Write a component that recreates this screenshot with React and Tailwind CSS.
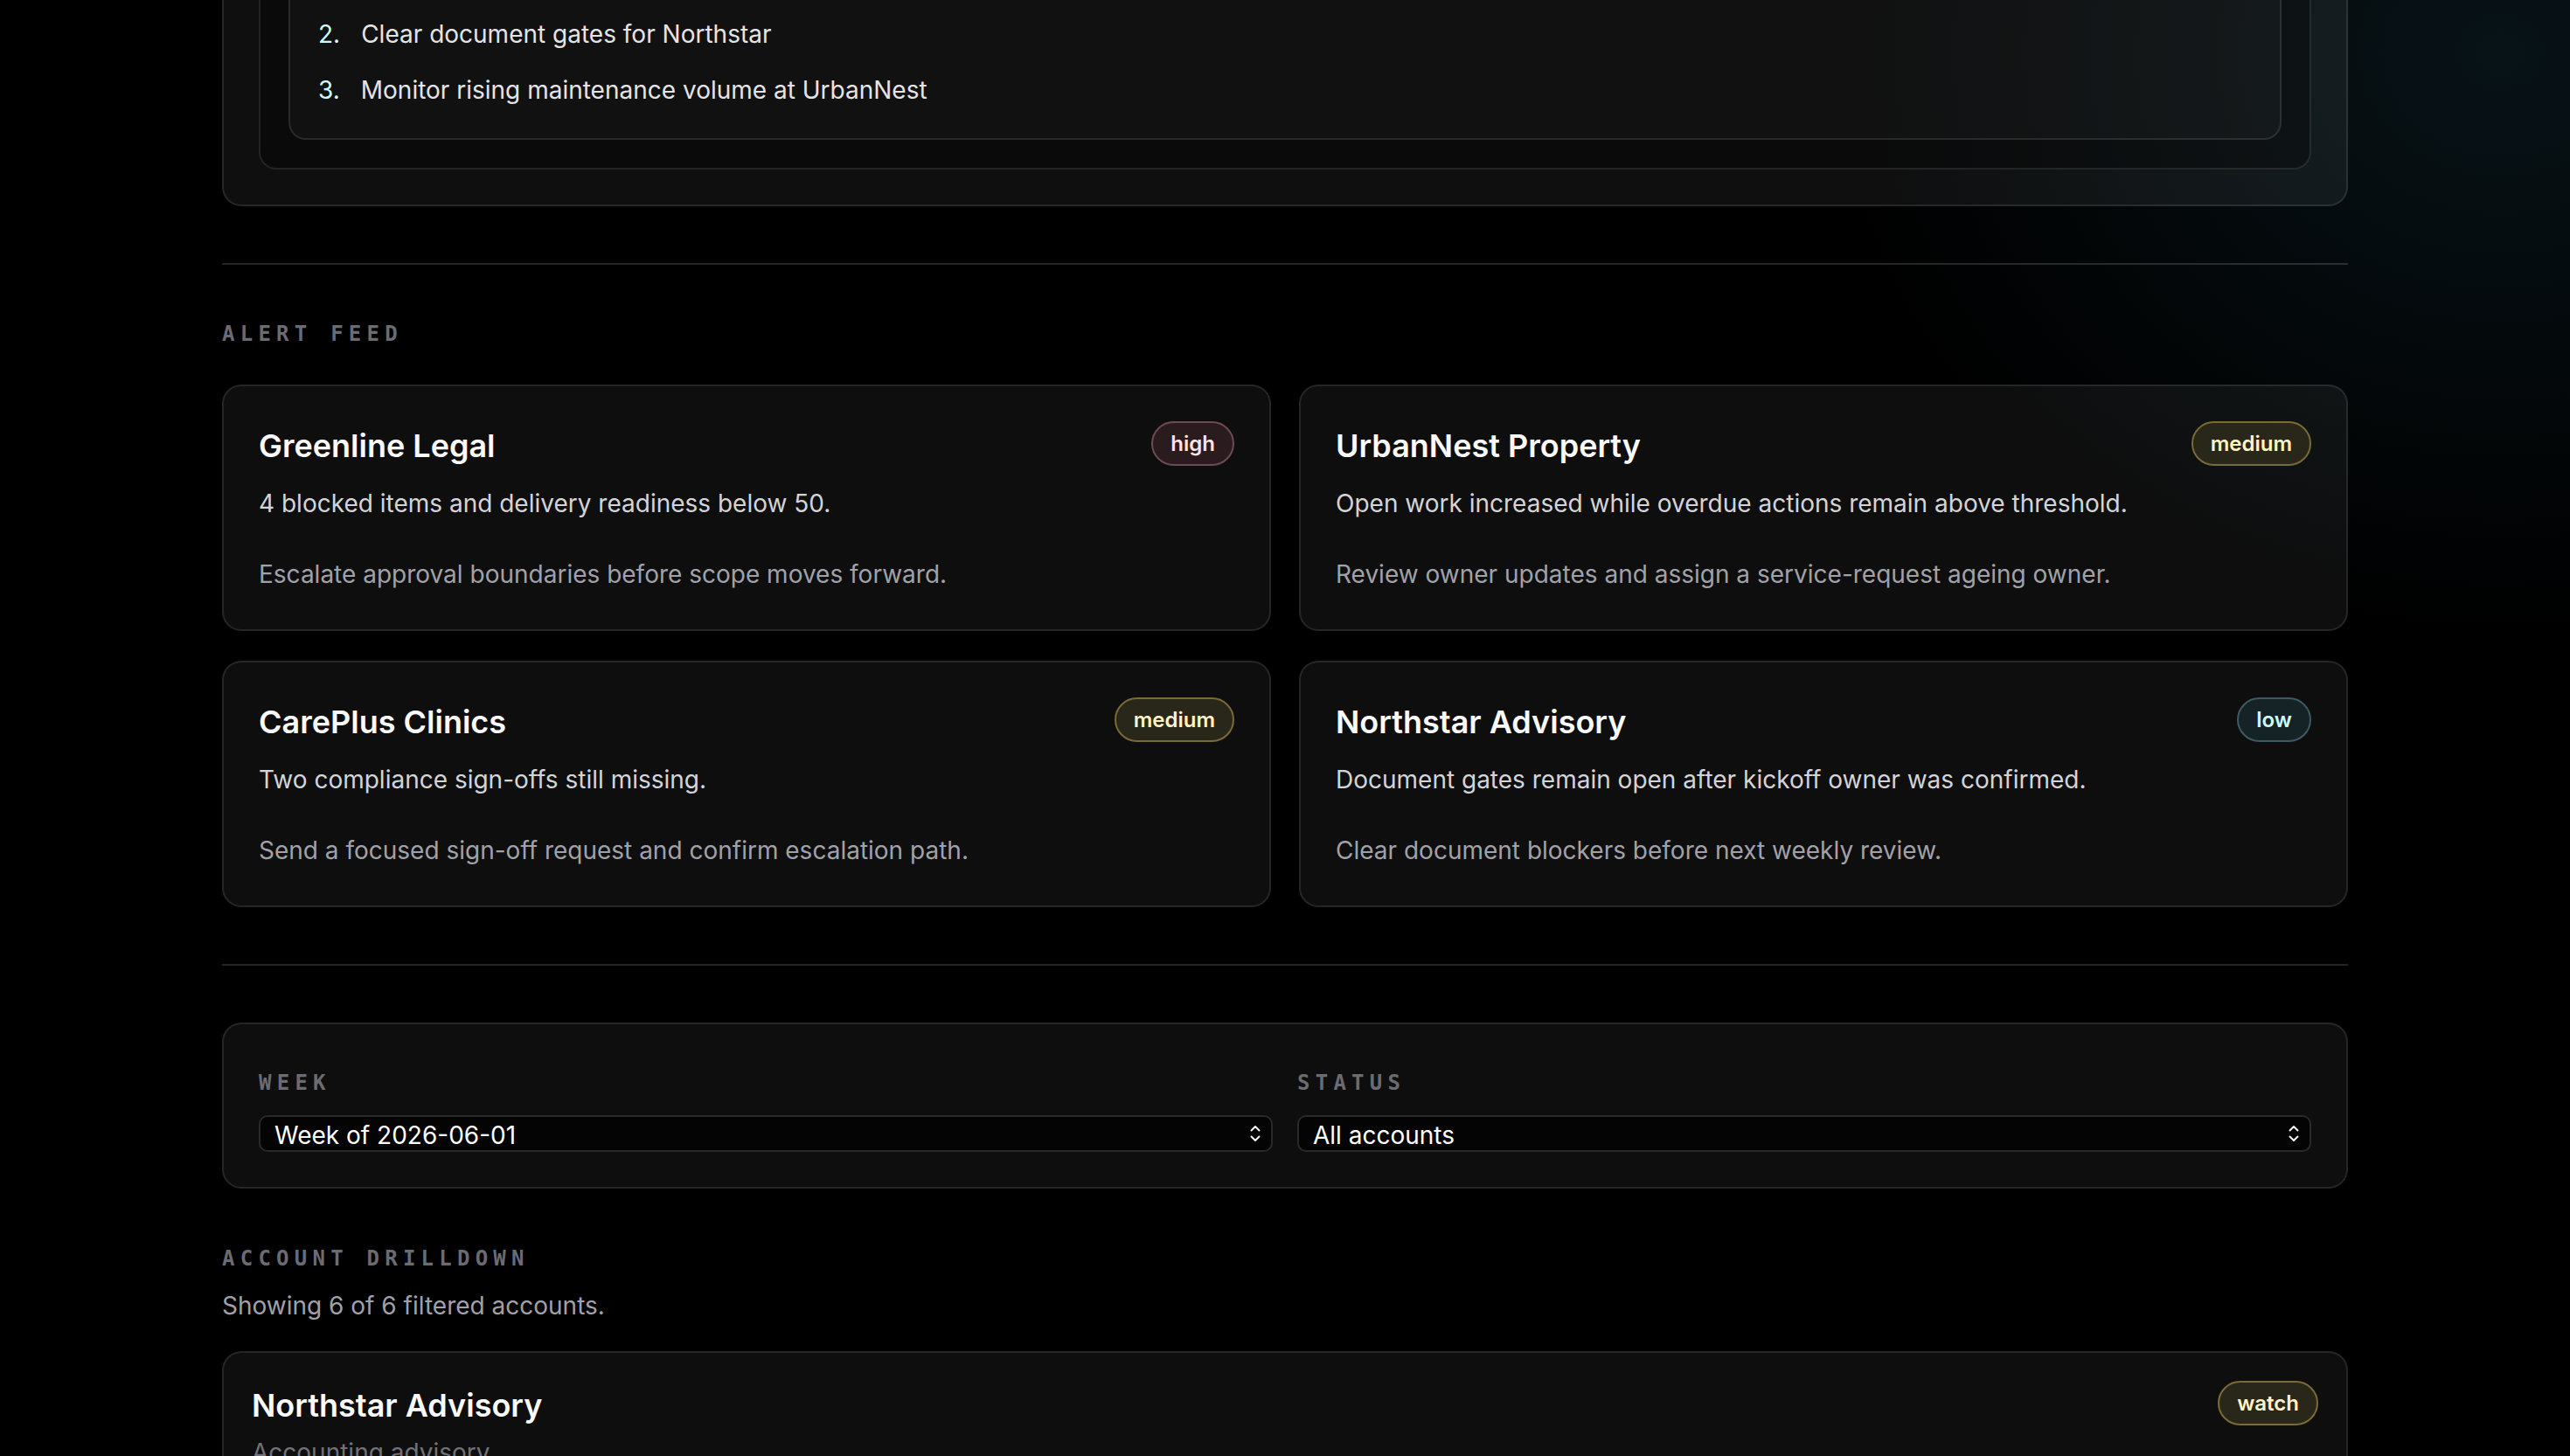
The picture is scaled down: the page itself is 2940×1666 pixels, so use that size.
import React from 'react';

// alert feed data
const alerts = [
  {
    name: 'Greenline Legal',
    level: 'high',
    issue: '4 blocked items and delivery readiness below 50.',
    action: 'Escalate approval boundaries before scope moves forward.',
  },
  {
    name: 'UrbanNest Property',
    level: 'medium',
    issue: 'Open work increased while overdue actions remain above threshold.',
    action: 'Review owner updates and assign a service-request ageing owner.',
  },
  {
    name: 'CarePlus Clinics',
    level: 'medium',
    issue: 'Two compliance sign-offs still missing.',
    action: 'Send a focused sign-off request and confirm escalation path.',
  },
  {
    name: 'Northstar Advisory',
    level: 'low',
    issue: 'Document gates remain open after kickoff owner was confirmed.',
    action: 'Clear document blockers before next weekly review.',
  },
];

const priorities = [
  'Escalate approval boundaries at Greenline',
  'Clear document gates for Northstar',
  'Monitor rising maintenance volume at UrbanNest',
];

const badgeTone = {
  high: 'border-[#6e4b52] bg-[#2a1b1e] text-[#ffe4e6]',
  medium: 'border-[#7a6a35] bg-[#29261a] text-[#fef3c7]',
  watch: 'border-[#7a6a35] bg-[#29261a] text-[#fef3c7]',
  low: 'border-[#3d5a63] bg-[#152226] text-[#cffafe]',
};

const Badge = ({ tone, children }) => (
  <span
    className={`inline-flex shrink-0 items-center rounded-full border-2 px-[20px] py-[8px] text-[24px] leading-[31px] font-semibold ${badgeTone[tone]}`}
  >
    {children}
  </span>
);

const SectionLabel = ({ children, className = '' }) => (
  <p
    className={`font-['DejaVu_Sans_Mono',monospace] text-[24px] leading-[32px] font-bold tracking-[0.26em] uppercase text-[#6b6b73] ${className}`}
  >
    {children}
  </p>
);

// up/down chevron of the select
const Chevrons = () => (
  <svg
    className="pointer-events-none absolute right-[13px] top-1/2 h-[24px] w-[14px] -translate-y-1/2"
    viewBox="0 0 14 24"
    fill="none"
    stroke="#f4f4f5"
    strokeWidth="2"
    strokeLinecap="round"
    strokeLinejoin="round"
  >
    <path d="M2.5 8.5 L7 4 L11.5 8.5" />
    <path d="M2.5 15.5 L7 20 L11.5 15.5" />
  </svg>
);

const FilterSelect = ({ label, value }) => (
  <label className="block">
    <SectionLabel className="mt-[11px]">{label}</SectionLabel>
    <div className="relative mt-[21px]">
      <select
        defaultValue={value}
        className="h-[42px] w-full appearance-none rounded-[10px] border-2 border-white/15 bg-black/70 pl-[16px] pr-[44px] text-[28px] text-white outline-none"
      >
        <option>{value}</option>
      </select>
      <Chevrons />
    </div>
  </label>
);

const AlertCard = ({ alert }) => (
  <div className="rounded-[22px] border-2 border-white/10 bg-white/[0.055] p-[40px]">
    <div className="flex items-start justify-between gap-6">
      <h3 className="text-[36px] leading-[56px] font-semibold text-[#fafafa]">{alert.name}</h3>
      <Badge tone={alert.level}>{alert.level}</Badge>
    </div>
    <p className="mt-[16px] text-[28px] leading-[45px] text-[#d4d4d8]">{alert.issue}</p>
    <p className="mt-[36px] text-[28px] leading-[45px] text-[#a1a1aa]">{alert.action}</p>
  </div>
);

export default function App() {
  return (
    <div className="h-screen overflow-hidden bg-black bg-[radial-gradient(ellipse_760px_660px_at_2860px_60px,rgba(14,34,42,0.55),rgba(0,0,0,0)_100%)] font-['Inter','Noto_Sans',sans-serif]">
      <main className="mx-auto flex max-w-[2560px] flex-col px-[64px] pb-[128px]">
        {/* weekly brief (scrolled partly out of view) */}
        <section className="-mt-[301px] rounded-[22px] border-2 border-white/10 bg-white/[0.06] p-[40px]">
          <h2 className="text-[36px] leading-[56px] font-semibold text-[#fafafa]">Weekly operating brief</h2>
          <div className="mt-[24px] rounded-[20px] border-2 border-white/10 bg-black/30 p-[32px]">
            <p className="text-[28px] leading-[40px] text-[#a1a1aa]">Top priorities this week</p>
            <div className="mt-[24px] rounded-[20px] border-2 border-white/10 bg-white/[0.03] p-[32px]">
              <ol className="flex flex-col gap-[19px] text-[28px] leading-[45px] text-[#e4e4e7]">
                {priorities.map((p, i) => (
                  <li key={p} className="flex gap-[24px]">
                    <span className="text-[#cffafe]">{i + 1}.</span>
                    <span>{p}</span>
                  </li>
                ))}
              </ol>
            </div>
          </div>
        </section>

        <div className="mt-[65px] h-[2px] bg-white/[0.15]" />

        {/* alert feed */}
        <SectionLabel className="mt-[63px]">Alert feed</SectionLabel>
        <div className="mt-[42px] grid grid-cols-2 gap-x-[32px] gap-y-[34px]">
          {alerts.map((a) => (
            <AlertCard key={a.name} alert={a} />
          ))}
        </div>

        <div className="mt-[65px] h-[2px] bg-white/[0.15]" />

        {/* filters */}
        <div className="mt-[65px] rounded-[22px] border-2 border-white/10 bg-white/[0.055] px-[40px] pt-[40px] pb-[40px]">
          <div className="grid grid-cols-2 gap-x-[28px]">
            <FilterSelect label="Week" value="Week of 2026-06-01" />
            <FilterSelect label="Status" value="All accounts" />
          </div>
        </div>

        {/* account drilldown */}
        <SectionLabel className="mt-[64px]">Account drilldown</SectionLabel>
        <p className="mt-[18px] text-[28px] leading-[40px] text-[#a1a1aa]">Showing 6 of 6 filtered accounts.</p>

        <div className="mt-[32px] rounded-[22px] border-2 border-white/10 bg-white/[0.055] p-[32px]">
          <div className="flex items-start justify-between gap-6">
            <div>
              <h3 className="text-[36px] leading-[56px] font-semibold text-[#fafafa]">Northstar Advisory</h3>
              <p className="mt-[6px] text-[28px] leading-[40px] text-[#71717a]">Accounting advisory</p>
            </div>
            <Badge tone="watch">watch</Badge>
          </div>
          <div className="mt-[32px] grid grid-cols-4 gap-[24px]">
            {['Readiness 62', 'Blocked 1', 'Overdue 2', 'Open work 9'].map((m) => (
              <div key={m} className="rounded-[16px] border-2 border-white/10 p-[24px] text-[28px] text-[#d4d4d8]">
                {m}
              </div>
            ))}
          </div>
        </div>
      </main>
    </div>
  );
}
